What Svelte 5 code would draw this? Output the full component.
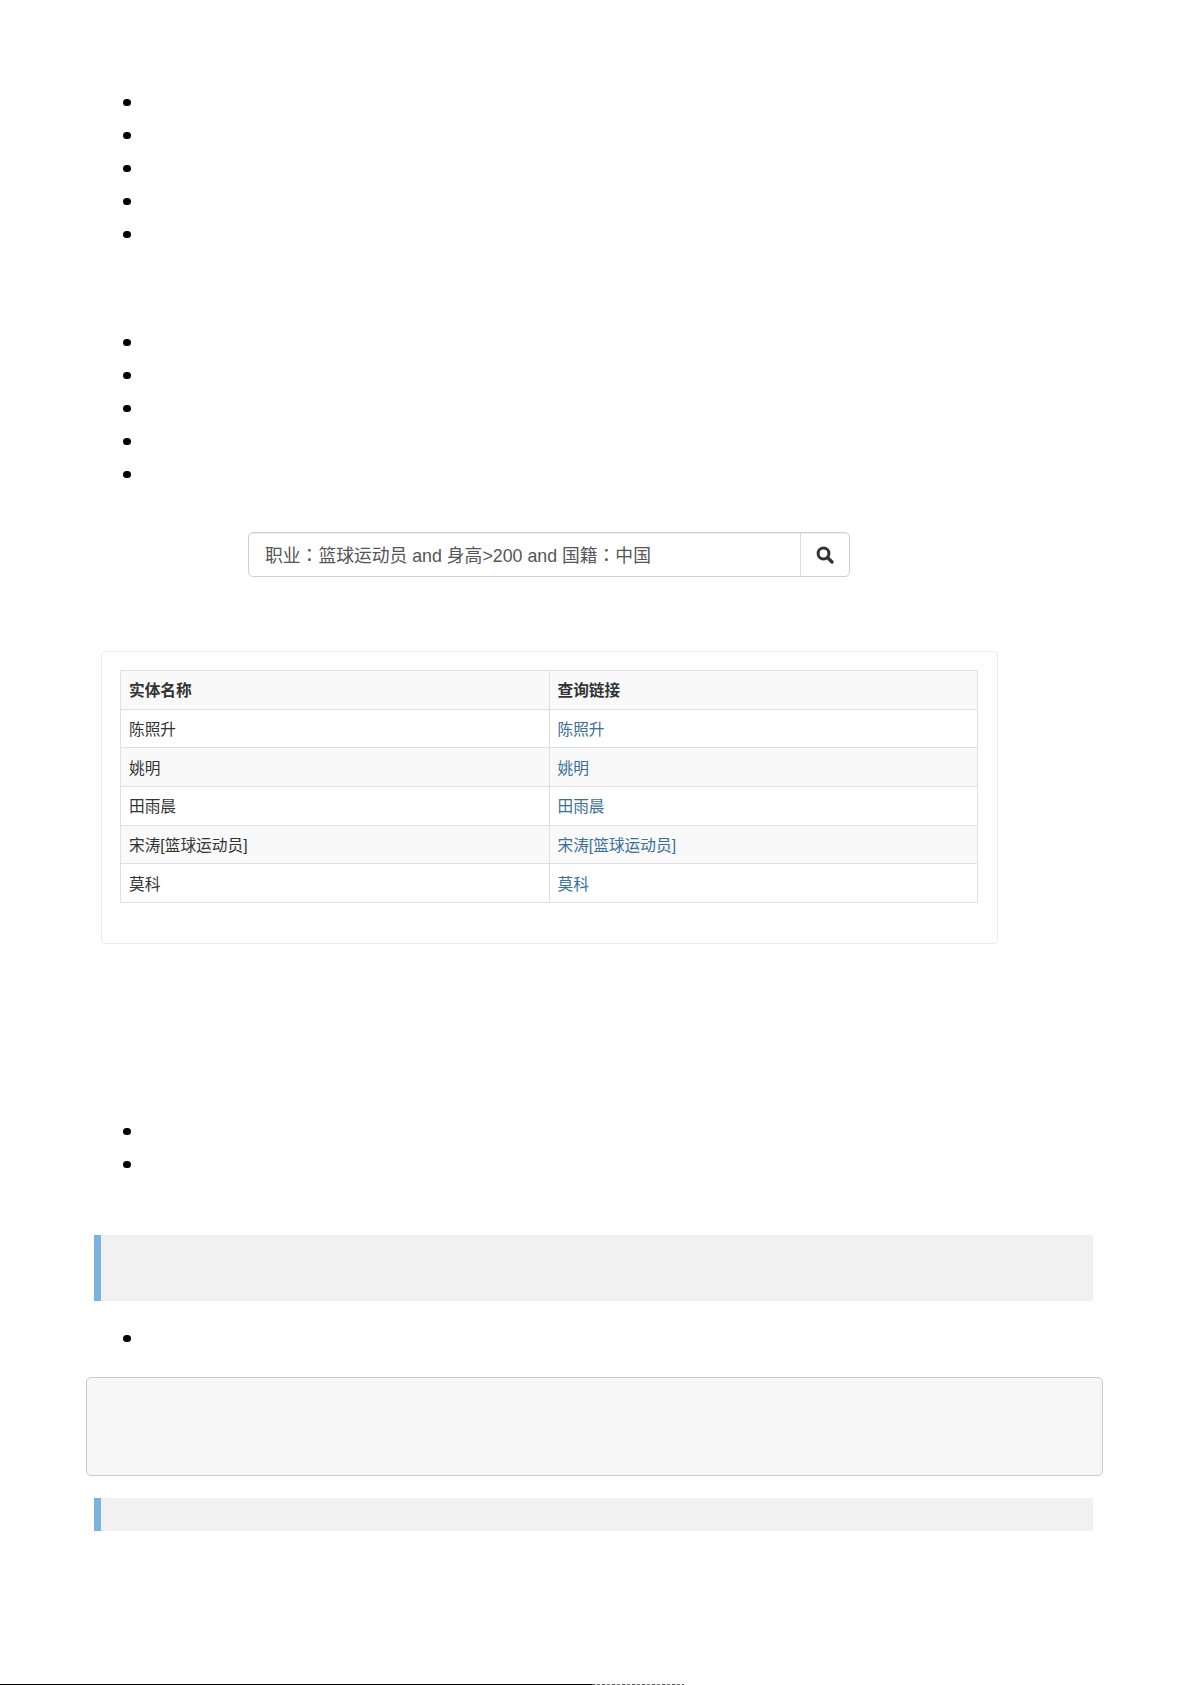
<script>
	const groupA = [1, 2, 3, 4, 5];
	const rows = ['陈照升', '姚明', '田雨晨', '宋涛[篮球运动员]', '莫科'];
</script>

<div class="page">
	<ul class="first">
		{#each groupA as n}
			<li>&nbsp;</li>
		{/each}
	</ul>
	<ul class="second">
		{#each groupA as n}
			<li>&nbsp;</li>
		{/each}
	</ul>

	<div class="search">
		<div class="query">职业<span class="colon">：</span>篮球运动员 and 身高&gt;200 and 国籍<span class="colon">：</span>中国</div>
		<button class="go" aria-label="search">
			<svg width="18" height="18" viewBox="0 0 18 18">
				<circle cx="7.5" cy="7.5" r="5.4" fill="none" stroke="#333" stroke-width="3" />
				<path d="M11.5 11.5 L16 16" stroke="#333" stroke-width="3.2" stroke-linecap="round" />
			</svg>
		</button>
	</div>

	<div class="card">
		<table>
			<thead>
				<tr><th>实体名称</th><th>查询链接</th></tr>
			</thead>
			<tbody>
				{#each rows as name}
					<tr><td>{name}</td><td><a href="#top">{name}</a></td></tr>
				{/each}
			</tbody>
		</table>
	</div>

	<ul class="third">
		<li>&nbsp;</li>
		<li>&nbsp;</li>
	</ul>

	<div class="quote tall"></div>
	<ul class="fourth">
		<li>&nbsp;</li>
	</ul>
	<pre class="code"></pre>
	<div class="quote short"></div>
</div>

<div class="rule">
	<span class="line"></span>
	<span class="stub"></span>
</div>

<style>
	:global(body) {
		margin: 0;
		background: #fff;
	}

	.page {
		height: 1684px;
		padding-top: 86px;
		box-sizing: border-box;
		font-family: "Liberation Sans", "Noto Sans CJK SC", sans-serif;
		color: #333;
	}

	ul {
		list-style: none;
		margin: 0;
		padding: 0 0 0 123px;
	}

	li {
		display: flex;
		align-items: center;
		height: 33px;
		font-size: 16px;
	}

	li::before {
		content: "";
		width: 7.5px;
		height: 7.5px;
		border-radius: 50%;
		background: #000;
	}

	.second {
		margin-top: 75px;
	}

	.search {
		display: flex;
		width: 602px;
		height: 45px;
		box-sizing: border-box;
		margin: 41px 0 0 248px;
		border: 1px solid #d0d0d0;
		border-radius: 5px;
		background: #fff;
		box-shadow: inset 0 1px 1px rgba(0, 0, 0, 0.075);
	}

	.query {
		flex: 1;
		padding-left: 16px;
		line-height: 43px;
		font-size: 17.8px;
		color: #555;
	}

	.colon {
		font-family: "Noto Sans CJK TC", sans-serif;
	}

	.go {
		display: flex;
		align-items: center;
		justify-content: center;
		width: 49px;
		padding: 0;
		border: 0;
		border-left: 1px solid #ddd;
		background: none;
	}

	.card {
		width: 897px;
		height: 293px;
		box-sizing: border-box;
		margin: 74px 0 0 101px;
		padding: 18px 19px 0 18px;
		border: 1px solid #ececec;
		border-radius: 4px;
	}

	table {
		width: 100%;
		table-layout: fixed;
		border-collapse: collapse;
		font-size: 15.7px;
	}

	th,
	td {
		height: 38.7px;
		box-sizing: border-box;
		padding: 0 8px;
		border: 1px solid #e0e0e0;
		text-align: left;
	}

	thead tr,
	tbody tr:nth-child(even) {
		background: #f9f9f9;
	}

	a {
		color: #3a7099;
		text-decoration: none;
	}

	.third {
		margin-top: 171px;
	}

	.quote {
		margin: 54px 0 0 94px;
		width: 999px;
		box-sizing: border-box;
		border-left: 7px solid #7ab4de;
		background: #f1f1f1;
	}

	.tall {
		height: 66px;
	}

	.short {
		height: 33px;
		margin-top: 22px;
	}

	.fourth {
		margin-top: 21px;
	}

	.code {
		width: 1017px;
		height: 99px;
		box-sizing: border-box;
		margin: 22px 0 0 86px;
		border: 1px solid #ccc;
		border-radius: 5px;
		background: #f7f7f7;
	}

	.rule {
		display: flex;
		height: 1px;
	}

	.line {
		width: 592px;
		background: #000;
	}

	.stub {
		width: 92px;
		background: repeating-linear-gradient(90deg, #555 0 3px, #ccc 3px 5px, #777 5px 8px, #eee 8px 10px);
	}
</style>
